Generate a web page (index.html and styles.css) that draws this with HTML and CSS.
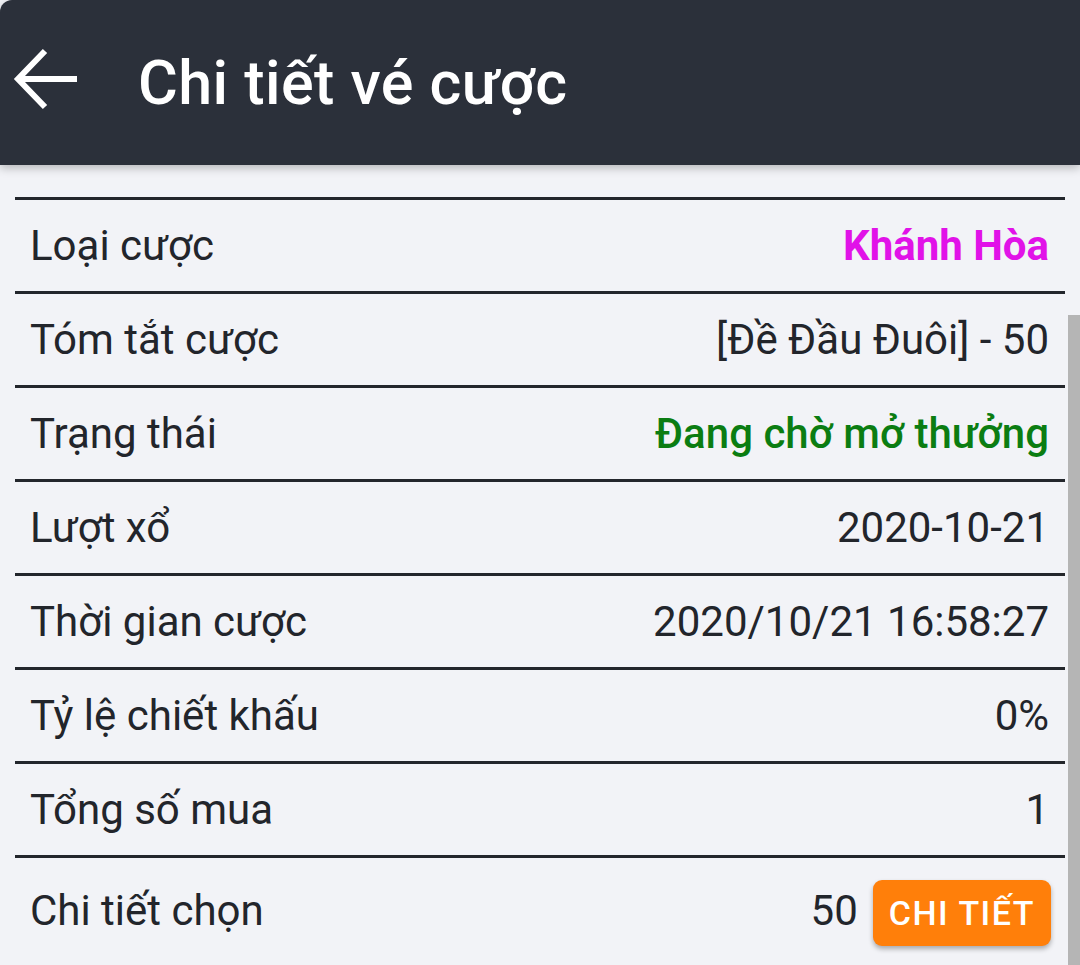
FILE: index.html
```html
<!DOCTYPE html>
<html lang="vi">
<head>
    <meta charset="UTF-8">
    <meta name="viewport" content="width=device-width, initial-scale=1.0">
    <title>Chi tiết vé cược</title>
    <link rel="stylesheet" href="styles.css">
</head>
<body>
    <header class="top-bar">
        <button class="back-button" aria-label="Quay lại">
            <svg width="64" height="66" viewBox="0 0 64 66">
                <path d="M32 3 L5 31 L32 59 M5 31 H64" fill="none" stroke="#fff" stroke-width="6"/>
            </svg>
        </button>
        <h1 class="title">Chi tiết vé cược</h1>
    </header>

    <main class="detail-list">
        <div class="row">
            <span class="label">Loại cược</span>
            <span class="value value-pink">Khánh Hòa</span>
        </div>
        <div class="row">
            <span class="label">Tóm tắt cược</span>
            <span class="value">[Đề Đầu Đuôi] - 50</span>
        </div>
        <div class="row">
            <span class="label">Trạng thái</span>
            <span class="value value-green">Đang chờ mở thưởng</span>
        </div>
        <div class="row">
            <span class="label">Lượt xổ</span>
            <span class="value">2020-10-21</span>
        </div>
        <div class="row">
            <span class="label">Thời gian cược</span>
            <span class="value">2020/10/21 16:58:27</span>
        </div>
        <div class="row">
            <span class="label">Tỷ lệ chiết khấu</span>
            <span class="value">0%</span>
        </div>
        <div class="row">
            <span class="label">Tổng số mua</span>
            <span class="value">1</span>
        </div>
        <div class="row row-last">
            <span class="label">Chi tiết chọn</span>
            <span class="value-group">
                <span class="value">50</span>
                <button class="detail-button">CHI TIẾT</button>
            </span>
        </div>
    </main>

    <div class="scrollbar"></div>
</body>
</html>
```

FILE: styles.css
```css
body {
    margin: 0;
    height: 965px;
    overflow: hidden;
    font-family: Roboto, "Noto Sans", sans-serif;
    background-color: #f2f3f7;
    color: #22252b;
}
.top-bar {
    display: flex;
    align-items: center;
    height: 165px;
    padding-left: 13px;
    background-color: #2b303a;
    box-shadow: 0 3px 10px rgba(0, 0, 0, 0.25);
    border-top-left-radius: 12px;
    position: relative;
    z-index: 1;
}
.back-button {
    display: flex;
    padding: 0;
    margin-top: -4px;
    border: none;
    background: none;
    cursor: pointer;
}
.title {
    margin: 0 0 0 61px;
    font-size: 61px;
    font-weight: 500;
    color: #fff;
    letter-spacing: 0.45px;
}
.detail-list {
    margin: 32px 15px 0;
}
.row {
    display: flex;
    align-items: center;
    justify-content: space-between;
    height: 91px;
    padding: 0 16px 0 15px;
    border-top: 3px solid #23262c;
}
.row-last {
    height: 104px;
}
.label, .value {
    font-size: 42px;
}
.value-pink {
    color: #e112e8;
    font-weight: 700;
}
.value-green {
    color: #0b7d12;
    font-weight: 500;
}
.value-group {
    display: flex;
    align-items: center;
    gap: 15px;
    margin-right: -2px;
}
.detail-button {
    height: 66px;
    margin-top: 5px;
    padding: 0 16px;
    font-family: Roboto, sans-serif;
    font-size: 34px;
    font-weight: 500;
    letter-spacing: 1.5px;
    color: #fff;
    background-color: #ff7f0a;
    border: none;
    border-radius: 9px;
    box-shadow: 0 3px 5px rgba(0, 0, 0, 0.3);
    cursor: pointer;
}
.scrollbar {
    position: absolute;
    top: 315px;
    right: 0;
    width: 12px;
    height: 650px;
    background-color: #b5b5b5;
}
```
